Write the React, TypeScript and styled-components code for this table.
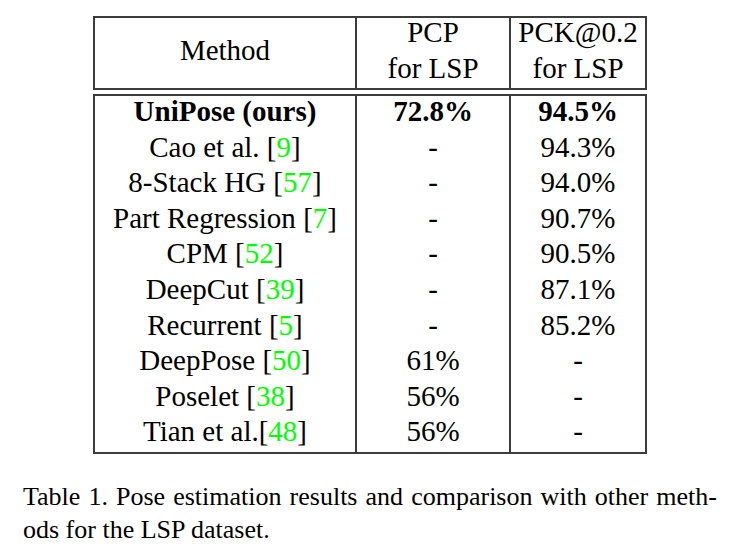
import React from "react";
import styled, { createGlobalStyle } from "styled-components";

const GlobalStyle = createGlobalStyle`
  html, body {
    margin: 0;
    padding: 0;
    background: #ffffff;
  }
  body {
    font-family: "Liberation Serif", "Times New Roman", Times, serif;
    color: #000000;
  }
`;

const LINE_COLOUR = "#3c3c3c";
const CITE_COLOUR = "#00ff00";

const Page = styled.div`
  width: 740px;
  height: 556px;
  padding-top: 16px;
  box-sizing: border-box;
  display: flex;
  flex-direction: column;
  align-items: center;
  font-family: "Liberation Serif", "Times New Roman", Times, serif;
`;

const TableBox = styled.div<{ $rowHeight: number }>`
  width: 554px;
  box-sizing: border-box;
  border: 2px solid ${LINE_COLOUR};
  display: grid;
  grid-template-columns: 262px 154px 134px;
  grid-auto-rows: ${(p) => p.$rowHeight}px;
  font-size: 29px;
`;

const HeaderBox = styled(TableBox)`
  margin-bottom: 4px;
`;

const HeaderCell = styled.div<{ $last?: boolean }>`
  display: flex;
  flex-direction: column;
  align-items: center;
  justify-content: center;
  line-height: 36px;
  padding-bottom: 6px;
  box-sizing: border-box;
  border-right: ${(p) => (p.$last ? "none" : `2px solid ${LINE_COLOUR}`)};
  white-space: nowrap;
`;

const Cell = styled.div<{ $last?: boolean; $bold?: boolean }>`
  text-align: center;
  line-height: 30.6px;
  padding-bottom: 5px;
  box-sizing: border-box;
  font-weight: ${(p) => (p.$bold ? 700 : 400)};
  border-right: ${(p) => (p.$last ? "none" : `2px solid ${LINE_COLOUR}`)};
  white-space: nowrap;
`;

const Cite = styled.span`
  color: ${CITE_COLOUR};
`;

const Caption = styled.div`
  width: 694px;
  margin-top: 26px;
  font-size: 26px;
  line-height: 33px;
`;

const CaptionLine = styled.div<{ $justify?: boolean }>`
  text-align: ${(p) => (p.$justify ? "justify" : "left")};
  text-align-last: ${(p) => (p.$justify ? "justify" : "left")};
  white-space: nowrap;
`;

interface Row {
  method: string;
  cite?: string;
  pcp: string;
  pck: string;
  bold?: boolean;
}

const rows: Row[] = [
  { method: "UniPose (ours)", pcp: "72.8%", pck: "94.5%", bold: true },
  { method: "Cao et al. ", cite: "9", pcp: "-", pck: "94.3%" },
  { method: "8-Stack HG ", cite: "57", pcp: "-", pck: "94.0%" },
  { method: "Part Regression ", cite: "7", pcp: "-", pck: "90.7%" },
  { method: "CPM ", cite: "52", pcp: "-", pck: "90.5%" },
  { method: "DeepCut ", cite: "39", pcp: "-", pck: "87.1%" },
  { method: "Recurrent ", cite: "5", pcp: "-", pck: "85.2%" },
  { method: "DeepPose ", cite: "50", pcp: "61%", pck: "-" },
  { method: "Poselet ", cite: "38", pcp: "56%", pck: "-" },
  { method: "Tian et al.", cite: "48", pcp: "56%", pck: "-" },
];

export default function App() {
  return (
    <Page>
      <GlobalStyle />
      <HeaderBox $rowHeight={70}>
        <HeaderCell>Method</HeaderCell>
        <HeaderCell>
          <span>PCP</span>
          <span>for LSP</span>
        </HeaderCell>
        <HeaderCell $last>
          <span>PCK@0.2</span>
          <span>for LSP</span>
        </HeaderCell>
      </HeaderBox>
      <TableBox $rowHeight={35.6}>
        {rows.map((row) => (
          <React.Fragment key={row.method}>
            <Cell $bold={row.bold}>
              {row.method}
              {row.cite && (
                <>
                  [<Cite>{row.cite}</Cite>]
                </>
              )}
            </Cell>
            <Cell $bold={row.bold}>{row.pcp}</Cell>
            <Cell $bold={row.bold} $last>
              {row.pck}
            </Cell>
          </React.Fragment>
        ))}
      </TableBox>
      <Caption>
        <CaptionLine $justify>
          Table 1. Pose estimation results and comparison with other meth-
        </CaptionLine>
        <CaptionLine>ods for the LSP dataset.</CaptionLine>
      </Caption>
    </Page>
  );
}
